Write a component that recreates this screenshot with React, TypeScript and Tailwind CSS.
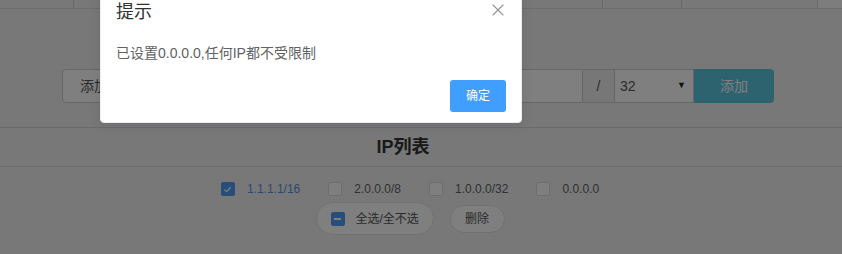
import { X } from 'lucide-react'

const ips = [
    { ip: '1.1.1.1/16', checked: true },
    { ip: '2.0.0.0/8', checked: false },
    { ip: '1.0.0.0/32', checked: false },
    { ip: '0.0.0.0', checked: false },
]

function Box({ checked }: { checked: boolean }) {
    if (checked) {
        return (
            <span className="flex h-[14px] w-[14px] items-center justify-center rounded-[2px] bg-[#4f9df5]">
                <svg width="9" height="9" viewBox="0 0 10 10" fill="none">
                    <path d="M1.5 5.2 L4 7.5 L8.5 2.5" stroke="#ffffff" strokeWidth="1.3" />
                </svg>
            </span>
        )
    }
    return <span className="h-[14px] w-[14px] rounded-[2px] border border-[#dcdcdc] bg-white" />
}

export default function App() {
    return (
        <div className="relative h-[254px] w-[842px] overflow-hidden bg-[#f1f1f1] font-['Liberation_Sans','Noto_Sans_CJK_SC',sans-serif]">
            {/* top table edge */}
            <div className="flex h-[9px] border-b border-[#dadada]">
                <div className="w-[74px] border-r border-[#d2d2d2]" />
                <div className="w-[529px] border-r border-[#d2d2d2]" />
                <div className="w-[79px] border-r border-[#d2d2d2]" />
                <div className="w-[136px] border-r border-[#d2d2d2]" />
                <div className="flex-1 bg-[#fafafa]" />
            </div>

            {/* add form */}
            <div className="mt-[60px] ml-[62px] flex h-[34px] w-[712px] text-[14px]">
                <div className="flex flex-1 items-center rounded-l-[4px] border border-[#cccccc] bg-white pl-[17px] text-[#555555]">
                    添加IP地址
                </div>
                <div className="flex w-[31px] items-center justify-center border-y border-[#cccccc] bg-[#eeeeee] text-[#555555]">/</div>
                <div className="flex w-[80px] items-center justify-between border border-[#cccccc] bg-white pl-[5px] pr-[7px] text-[#555555]">
                    <span>32</span>
                    <span className="text-[9px] text-[#222]">▼</span>
                </div>
                <div className="flex w-[80px] items-center justify-center rounded-r-[4px] bg-[#5bc6df] text-white">添加</div>
            </div>

            {/* list header */}
            <div className="mt-[24px] flex h-[40px] items-center justify-center border-y border-[#d6d6d6] pr-[36px]">
                <span className="text-[18px] font-bold text-[#333333]">IP列表</span>
            </div>

            {/* ip checkboxes */}
            <div className="mt-[13px] flex h-[18px] items-center justify-center gap-[28px] pr-[22px] text-[12px]">
                {ips.map((item) => (
                    <label key={item.ip} className="flex items-center gap-[12px]">
                        <Box checked={item.checked} />
                        <span className={item.checked ? 'text-[#5a8fe0]' : 'text-[#606266]'}>{item.ip}</span>
                    </label>
                ))}
            </div>

            <div className="mt-[4px] flex items-center justify-center gap-[16px] pr-[22px] text-[12px] text-[#555555]">
                <div className="flex h-[33px] w-[118px] items-center gap-[11px] rounded-full border border-[#e2e2e2] bg-white pl-[14px]">
                    <span className="flex h-[14px] w-[14px] items-center justify-center rounded-[2px] bg-[#4f9df5]">
                        <span className="h-[2px] w-[7px] bg-white" />
                    </span>
                    全选/全不选
                </div>
                <div className="flex h-[28px] w-[55px] items-center justify-center rounded-full border border-[#e2e2e2] bg-white">删除</div>
            </div>

            {/* overlay */}
            <div className="absolute inset-0 bg-black/50" />

            {/* message box */}
            <div className="absolute left-[100px] top-[-13px] w-[422px] rounded-[4px] border border-[#ebeef5] bg-white pb-[10px] shadow-[0_2px_12px_rgba(0,0,0,0.1)]">
                <div className="relative px-[15px] pb-[10px] pt-[15px]">
                    <div className="text-[18px] leading-[18px] text-[#303133]">提示</div>
                    <button className="absolute right-[13px] top-[12px] text-[#909399]">
                        <X size={20} strokeWidth={1.3} />
                    </button>
                </div>
                <div className="px-[15px] py-[10px] text-[14px] leading-[24px] text-[#606266]">
                    已设置0.0.0.0,任何IP都不受限制
                </div>
                <div className="flex justify-end px-[15px] pt-[5px]">
                    <button className="h-[32px] w-[56px] rounded-[3px] bg-[#409eff] text-[12px] text-white">确定</button>
                </div>
            </div>
        </div>
    )
}
